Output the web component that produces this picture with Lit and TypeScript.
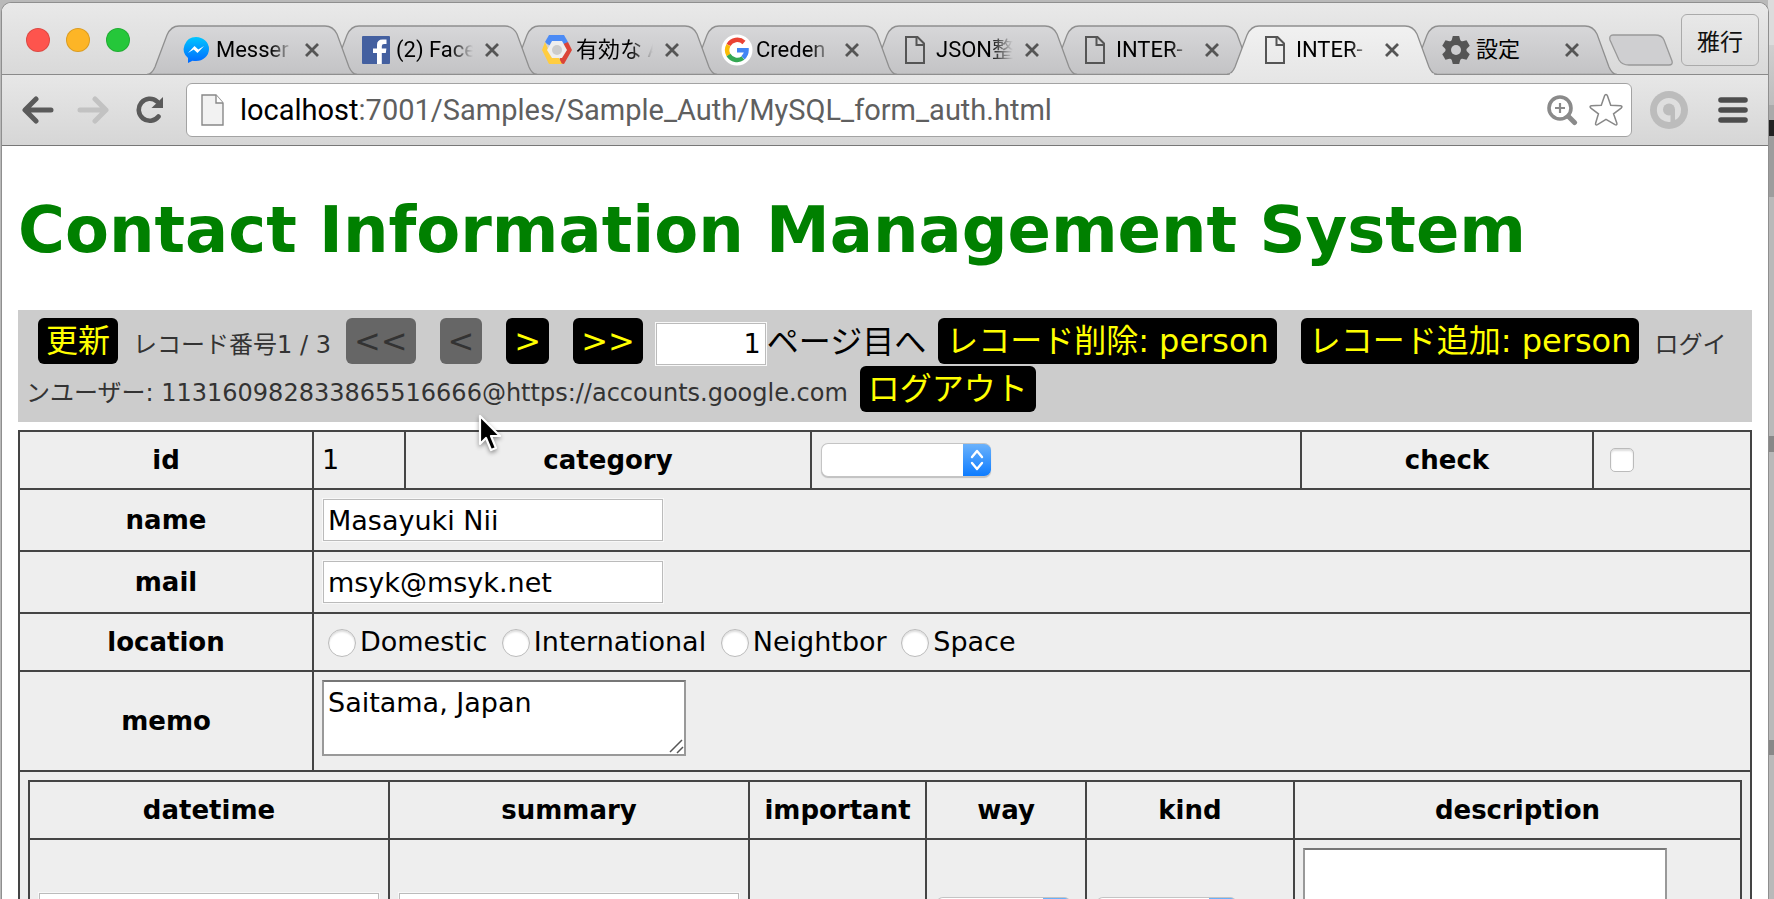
import { LitElement, html, css, svg } from "lit";
import { customElement, state } from "lit/decorators.js";
import { classMap } from "lit/directives/class-map.js";
import { styleMap } from "lit/directives/style-map.js";

const icons: Record<string, unknown> = {
  messenger: svg`<defs><linearGradient id="m" x1="0" y1="0" x2="0" y2="1"><stop offset="0" stop-color="#00c6ff"/><stop offset="1" stop-color="#0068ff"/></linearGradient></defs>
    <path d="M13 2a13 12 0 0 1 0 24q-2 0-3.500-.3L5 28v-5A12.500 12 0 0 1 13 2z" fill="url(#m)"/>
    <path d="M5 18l6.500-7 3.800 3.500L21 11l-6.500 7-3.800-3.500z" fill="#fff"/>`,
  facebook: svg`<rect x="-1" y="1" width="28" height="28" rx="1" fill="#4460a0"/>
    <path d="M14 29V18h-4v-4.500h4V10q0-5.500 5.500-5.500h4v4.500h-2.500q-2.200 0-2.200 2v2.500h4.600l-.6 4.500h-4v11z" fill="#fff"/>`,
  cloud: svg`<path d="M6 0h15l4 7-4 4H8L4 9 2 7z" fill="#4c8bf5"/><path d="M25 7l4 8-8 14-6-1 6-13-3-5z" fill="#db4437"/>
    <path d="M2 7L-1 15l7 14h13l-3-6H10L5 14z" fill="#ffcd40"/><path d="M9 6h10l5 9-5 8H9l-5-8z" fill="#eee"/><circle cx="14" cy="15" r="5" fill="#ccc"/>`,
  google: svg`<circle cx="14" cy="15" r="15.500" fill="#fff"/>
    <path d="M5.500 10A10 10 0 0 1 21 7.500" fill="none" stroke="#ea4335" stroke-width="4.500"/>
    <path d="M5.500 10a10 10 0 0 0 0 10" fill="none" stroke="#fbbc05" stroke-width="4.500"/>
    <path d="M5.500 20A10 10 0 0 0 20 23" fill="none" stroke="#34a853" stroke-width="4.500"/>
    <path d="M14 15.200h9.500q0 4.500-3.500 7.500" fill="none" stroke="#4285f4" stroke-width="4.500"/>`,
  file: svg`<path d="M3 2h11.500L21 8.500V28H3z" fill="none" stroke="#555" stroke-width="2"/><path d="M13.500 2v8H21" fill="none" stroke="#555" stroke-width="2"/>`,
  gear: svg`<g fill="#555"><circle cx="13" cy="15" r="10.500"/>
    ${[0, 60, 120].map((a) => svg`<path d="M8.500 6l1.300-5h6.400l1.300 5v18l-1.300 5h-6.400l-1.300-5z" transform="rotate(${a} 13 15)"/>`)}</g>
    <circle cx="13" cy="15" r="5" fill="#cdcdcf"/>`,
};

interface Tab { icon: string; title: string }

const tabs: Tab[] = [
  { icon: "messenger", title: "Messer" },
  { icon: "facebook", title: "(2) Face" },
  { icon: "cloud", title: "有効な A" },
  { icon: "google", title: "Creden" },
  { icon: "file", title: "JSON整" },
  { icon: "file", title: "INTER-" },
  { icon: "file", title: "INTER-" },
  { icon: "gear", title: "設定" },
];

@customElement("browser-tabs")
class BrowserTabs extends LitElement {
  static styles = css`
    :host { display: block; }
    .strip {
      display: flex; align-items: flex-end; height: 72px; box-sizing: border-box;
      padding: 0 9px 0 24px; border-bottom: 1px solid #8a8a8a;
      background: linear-gradient(#e9e9e9, #d9d9d9);
      font: 22px/26px "Roboto", "Noto Sans CJK JP", sans-serif;
    }
    .lights { display: flex; gap: 16px; align-self: center; margin-right: 17px; padding-top: 3px; }
    .light { width: 24px; height: 24px; border-radius: 50%; box-sizing: border-box; border: 1px solid #0002; padding: 0; }
    .red { background: #fe544d; }
    .yellow { background: #fdb526; }
    .green { background: #25c73a; }
    .tabs { display: flex; height: 50px; margin-bottom: -1px; min-width: 0; isolation: isolate; }
    .tab {
      position: relative; display: flex; align-items: center; width: 210px; box-sizing: border-box;
      padding: 0 36px 0 36px; margin-right: -30px;
    }
    .shape { position: absolute; inset: 0; width: 100%; height: 100%; }
    .pick {
      position: relative; display: flex; align-items: center; gap: 5px; flex: 1; min-width: 0;
      border: 0; background: none; padding: 0; font: inherit; color: #000; text-align: left;
    }
    .icon { width: 28px; height: 30px; flex: none; overflow: visible; }
    .title { flex: 1; min-width: 0; white-space: nowrap; mask-image: linear-gradient(90deg, #000 70%, transparent); }
    .plain .title { mask-image: none; }
    .close { position: relative; border: 0; background: none; padding: 0; margin-left: 10px; }
    .close svg { display: block; width: 18px; height: 18px; }
    .new { border: 0; background: none; padding: 0; width: 64px; height: 32px; margin: 0 0 8px 22px; }
    .new svg { display: block; }
    .user {
      margin: 0 0 8px auto; width: 78px; height: 52px; border: 1px solid #aaa; border-radius: 6px;
      background: linear-gradient(#e8e8e8, #dcdcdc); font: 23px "Noto Sans CJK JP", sans-serif; padding: 0; color: #111;
    }
  `;

  @state() private current = 6;

  private shape(i: number) {
    const on = i === this.current;
    const outline = "M0 49.500Q5 49 8 42L20 10Q24 1 32 1H178Q186 1 190 9L202 42Q205 49 210 49.500";
    return html`<svg class="shape" viewBox="0 0 210 50" preserveAspectRatio="none">
      <defs><linearGradient id="fill${i}" x1="0" y1="0" x2="0" y2="1">
        <stop offset="0" stop-color=${on ? "#f1f1f1" : "#d7d7d9"}/>
        <stop offset="1" stop-color=${on ? "#e7e7e7" : "#c3c3c5"}/></linearGradient></defs>
      <path d=${on ? outline : outline + "Z"} fill="url(#fill${i})" stroke="#8f8f8f" stroke-width="1.300"/>
      ${on ? svg`<path d="M3 49.500H207" stroke="#e7e7e7" stroke-width="2"/>` : ""}
    </svg>`;
  }

  render() {
    return html`<div class="strip">
      <div class="lights">
        <button class="light red" aria-label="Close window"></button>
        <button class="light yellow" aria-label="Minimize window"></button>
        <button class="light green" aria-label="Zoom window"></button>
      </div>
      <div class="tabs">
        ${tabs.map((t, i) => html`
          <div class=${classMap({ tab: true, plain: t.icon === "gear" })}
            style=${styleMap({ zIndex: String(i === this.current ? tabs.length + 1 : tabs.length - i) })}>
            ${this.shape(i)}
            <button class="pick" @click=${() => (this.current = i)}>
              <svg class="icon" viewBox="0 0 28 30">${icons[t.icon]}</svg>
              <span class="title">${t.title}</span>
            </button>
            <button class="close" aria-label="Close tab">
              <svg viewBox="0 0 18 18"><path d="M3 3l12 12M15 3L3 15" stroke="#555" stroke-width="2.800"/></svg>
            </button>
          </div>`)}
      </div>
      <button class="new" aria-label="New tab">
        <svg width="64" height="32" viewBox="0 0 64 32"><path d="M4 1H46Q53 1 55 6L63 27Q64 31 60 31H20Q13 31 10 26L1 6Q0 1 4 1z" fill="#cfcfd1" stroke="#999" stroke-width="1.300"/></svg>
      </button>
      <button class="user">雅行</button>
    </div>`;
  }
}

@customElement("browser-toolbar")
class BrowserToolbar extends LitElement {
  static styles = css`
    :host { display: block; }
    .bar {
      display: flex; align-items: center; height: 71px; box-sizing: border-box; padding: 0 20px 0 20px;
      border-bottom: 1px solid #777; background: linear-gradient(#e7e7e7, #d6d6d6);
    }
    button { border: 0; background: none; padding: 0; }
    svg { display: block; }
    .back { margin-right: 23px; }
    .forward { margin-right: 27px; }
    .reload { margin-right: 22px; }
    .box {
      display: flex; align-items: center; flex: 1; height: 54px; box-sizing: border-box; background: #fff;
      border: 1px solid #a3a3a3; border-radius: 6px; padding: 0 8px 0 14px; gap: 15px;
    }
    .address { flex: 1; font: 29px/34px "Roboto", sans-serif; color: #5f5f5f; white-space: nowrap; }
    .host { color: #000; }
    .tools { display: flex; align-items: center; gap: 11px; }
    .ext { margin: 0 30px 0 18px; }
  `;

  render() {
    return html`<div class="bar">
      <button class="back" aria-label="Back"><svg width="32" height="28" viewBox="0 0 32 28"><path d="M29 14H5M14 3L3 14l11 11" fill="none" stroke="#5a5a5a" stroke-width="5" stroke-linecap="round" stroke-linejoin="round"/></svg></button>
      <button class="forward" aria-label="Forward" disabled><svg width="32" height="28" viewBox="0 0 32 28"><path d="M3 14h24M18 3l11 11-11 11" fill="none" stroke="#c2c2c2" stroke-width="5" stroke-linecap="round" stroke-linejoin="round"/></svg></button>
      <button class="reload" aria-label="Reload"><svg width="28" height="28" viewBox="0 0 28 28"><path d="M22.500 20.500A11 11 0 1 1 21 5.500" fill="none" stroke="#5a5a5a" stroke-width="4.600" stroke-linecap="round"/><path d="M27 1v11H15.500z" fill="#5a5a5a"/></svg></button>
      <div class="box">
        <svg width="24" height="32" viewBox="0 0 24 32"><path d="M1 1h14l7 8v22H1z" fill="#f2f2f2" stroke="#888" stroke-width="1.400"/><path d="M15 1v8h7" fill="#fff" stroke="#888" stroke-width="1.400"/></svg>
        <div class="address"><span class="host">localhost</span>:7001/Samples/Sample_Auth/MySQL_form_auth.html</div>
        <div class="tools">
          <button aria-label="Zoom"><svg width="32" height="32" viewBox="0 0 32 32"><circle cx="14" cy="14" r="11" fill="none" stroke="#8a8a8a" stroke-width="3.600"/><path d="M14 9v10M9 14h10" stroke="#8a8a8a" stroke-width="2.200"/><path d="M22.500 22.500l6 6" stroke="#8a8a8a" stroke-width="5" stroke-linecap="round"/></svg></button>
          <button aria-label="Bookmark"><svg width="34" height="34" viewBox="0 0 36 36"><path d="M18 1.500q1 0 1.500 1.500L23 13l10.500.500q2.500.500.500 2.500L26 22l3.500 10q.5 2.500-2 1.500L18 28l-9 5.500q-2.500 1-2-1.500L10 22 2 16q-2-2 .5-2.500L13 13l3.500-10Q17 1.500 18 1.500z" fill="#fff" stroke="#888" stroke-width="1.600"/></svg></button>
        </div>
      </div>
      <button class="ext" aria-label="Extension"><svg width="38" height="38" viewBox="0 0 38 38"><circle cx="19" cy="19" r="19" fill="#bcbcbc"/><path d="M19 7a12 12 0 1 0 2 23.800l6-2.800q4-3.500 4-9A12 12 0 0 0 19 7z" fill="#dedede"/><circle cx="19" cy="18.500" r="6" fill="#bcbcbc"/><path d="M20.500 18h4.500v12l-4.500 3z" fill="#bcbcbc"/></svg></button>
      <button aria-label="Menu"><svg width="30" height="26" viewBox="0 0 30 26"><path d="M3 3h24M3 13h24M3 23h24" stroke="#4d4d4d" stroke-width="5.600" stroke-linecap="round"/></svg></button>
    </div>`;
  }
}

const places = ["Domestic", "International", "Neightbor", "Space"];

@customElement("app-root")
class AppRoot extends LitElement {
  static styles = css`
    :host {
      display: block; height: 100vh; overflow: hidden; position: relative; box-sizing: border-box; padding: 3px 6px 0 2px;
      font: 27px/34px "DejaVu Sans", "Noto Sans CJK JP", sans-serif; color: #000;
      background: #b9b9b9 linear-gradient(#dcdcdc 0 45px, #cfcfcf 45px, #bdbdbd 105px, #aaa 105px 120px, #222 120px 136px,
        #9d9d9d 136px 197px, #b9b9b9 197px 436px, #888 436px 452px, #b9b9b9 452px 740px, #888 740px 755px, #b9b9b9 755px)
        right top / 6px 100% no-repeat;
    }
    .window { background: #fff; border-radius: 9px 9px 0 0; overflow: hidden; box-shadow: 0 0 0 1px #8f8f8f; min-height: 100%; }
    .page { padding: 45px 16px 0; }
    h1 { margin: 0 0 41px; font-size: 64px; line-height: 78px; color: green; }
    .navi { background: #ccc; padding: 8px; line-height: 48px; color: #333; font-size: 24px; }
    .navi button {
      font: 32px/46px "DejaVu Sans", "Noto Sans CJK JP", sans-serif; background: #000; color: #ff0;
      border: 0; border-radius: 6px; padding: 0 8px; height: 46px; vertical-align: top; margin: 0 12px;
    }
    .navi button:disabled { background: #666; color: #333; }
    .note { margin: 0 3px; line-height: 36px; vertical-align: -3px; }
    .note:last-of-type { margin-right: 0; }
    .jump { display: inline-block; vertical-align: top; font-size: 32px; color: #000; }
    input, textarea, select { font: inherit; color: #000; margin: 0; box-sizing: border-box; border-radius: 0; }
    .text {
      display: block; width: 340px; height: 42px; margin: 1px; padding: 0 4px;
      border: 1px solid #bbb; background: #fff; box-shadow: 0 0 0 1px #f8f8f8;
    }
    .navi .num { display: inline-block; width: 110px; margin-top: 5px; text-align: right; vertical-align: top; font-size: 27px; }
    table { border-collapse: collapse; background: #eee; width: 100%; table-layout: fixed; }
    .main { margin-top: 8px; }
    th, td { border: 2px solid #444; padding: 8px; height: 40px; text-align: left; box-sizing: content-box; }
    th { text-align: center; font-size: 26px; }
    .w92 { width: 92px; }
    .w158 { width: 158px; }
    .w160 { width: 160px; }
    .w177 { width: 177px; }
    .w208 { width: 208px; }
    .w292 { width: 292px; }
    .w294 { width: 294px; }
    .w360 { width: 360px; }
    .w406 { width: 406px; }
    .choice {
      display: block; width: 170px; height: 34px; margin: 0 1px; appearance: none; border: 1px solid #c4c4c4; border-right: 0;
      border-radius: 7px; box-shadow: 0 1px 1px #0003;
      background: #fff url('data:image/svg+xml,<svg xmlns="http://www.w3.org/2000/svg" viewBox="0 0 28 34"><defs><linearGradient id="b" x1="0" y1="0" x2="0" y2="1"><stop offset="0" stop-color="%236db3fb"/><stop offset="1" stop-color="%230a7aff"/></linearGradient></defs><path d="M0 0h28v34H0z" fill="url(%23b)"/><path d="M9 14l5-6 5 6M9 20l5 6 5-6" fill="none" stroke="white" stroke-width="2.400" stroke-linecap="round" stroke-linejoin="round"/></svg>') right center / 28px 34px no-repeat border-box;
    }
    .way { width: 135px; }
    .kind { width: 141px; }
    .check, .radio { appearance: none; background: #fff; border: 1px solid #bbb; box-shadow: inset 0 2px 2px #0002; }
    .check { display: block; width: 24px; height: 24px; border-radius: 5px; margin: 0 8px; }
    .radio { width: 28px; height: 28px; border-radius: 50%; margin: 0 4px 0 6px; vertical-align: -6px; }
    .memo {
      display: block; width: 364px; height: 76px; margin-bottom: 6px; padding: 4px; resize: both;
      border: 2px solid #999; border-top-color: #777; background: #fff;
    }
    .memo::-webkit-resizer {
      background: url('data:image/svg+xml,<svg xmlns="http://www.w3.org/2000/svg" viewBox="0 0 15 15"><path d="M1 13L13 1M8 14l6-6" stroke="%23555" stroke-width="1.500"/></svg>') center / 15px 15px no-repeat;
    }
    .tall { height: 132px; margin-bottom: 0; }
    .cursor { position: absolute; left: 477px; top: 413px; width: 28px; height: 42px; filter: drop-shadow(0 2px 2px #0006); }
  `;

  render() {
    return html`<div class="window">
      <browser-tabs></browser-tabs>
      <browser-toolbar></browser-toolbar>
      <div class="page">
        <h1>Contact Information Management System</h1>
        <div class="navi"><button>更新</button><span class="note">レコード番号1 / 3</span><button disabled>&lt;&lt;</button><button disabled>&lt;</button><button>&gt;</button><button>&gt;&gt;</button><input class="text num" id="page" value="1"><label class="jump" for="page">ページ目へ</label><button>レコード削除: person</button><button>レコード追加: person</button><span class="note">ログインユーザー: 113160982833865516666@https://accounts.google.com</span><button>ログアウト</button></div>
        <table class="main">
          <colgroup><col class="w294"><col class="w92"><col class="w406"><col><col class="w292"><col class="w158"></colgroup>
          <tbody>
            <tr>
              <th>id</th><td>1</td>
              <th><label for="category">category</label></th>
              <td><select class="choice" id="category"><option></option></select></td>
              <th><label for="check">check</label></th>
              <td><input class="check" id="check" type="checkbox"></td>
            </tr>
            <tr><th><label for="name">name</label></th><td colspan="5"><input class="text" id="name" value="Masayuki Nii"></td></tr>
            <tr><th><label for="mail">mail</label></th><td colspan="5"><input class="text" id="mail" value="msyk@msyk.net"></td></tr>
            <tr><th>location</th><td colspan="5">${places.map((p) => html`<label><input class="radio" type="radio" name="location" value=${p}>${p}</label> `)}</td></tr>
            <tr><th><label for="memo">memo</label></th><td colspan="5"><textarea class="memo" id="memo" .value=${"Saitama, Japan"}></textarea></td></tr>
            <tr><td colspan="6">
              <table>
                <colgroup><col class="w360"><col class="w360"><col class="w177"><col class="w160"><col class="w208"><col></colgroup>
                <thead>
                  <tr><th>datetime</th><th>summary</th><th>important</th><th>way</th><th>kind</th><th>description</th></tr>
                </thead>
                <tbody>
                  <tr>
                    <td><input class="text" aria-label="datetime"></td>
                    <td><input class="text" aria-label="summary"></td>
                    <td><input class="check" type="checkbox" aria-label="important"></td>
                    <td><select class="choice way" aria-label="way"><option></option></select></td>
                    <td><select class="choice kind" aria-label="kind"><option></option></select></td>
                    <td><textarea class="memo tall" aria-label="description"></textarea></td>
                  </tr>
                </tbody>
              </table>
            </td></tr>
          </tbody>
        </table>
      </div>
    </div>
    <svg class="cursor" viewBox="0 0 28 42"><path d="M3 3v28l6-6 5 12 5-2-5-12h9z" fill="#000" stroke="#fff" stroke-width="2.200" stroke-linejoin="round"/></svg>`;
  }
}
